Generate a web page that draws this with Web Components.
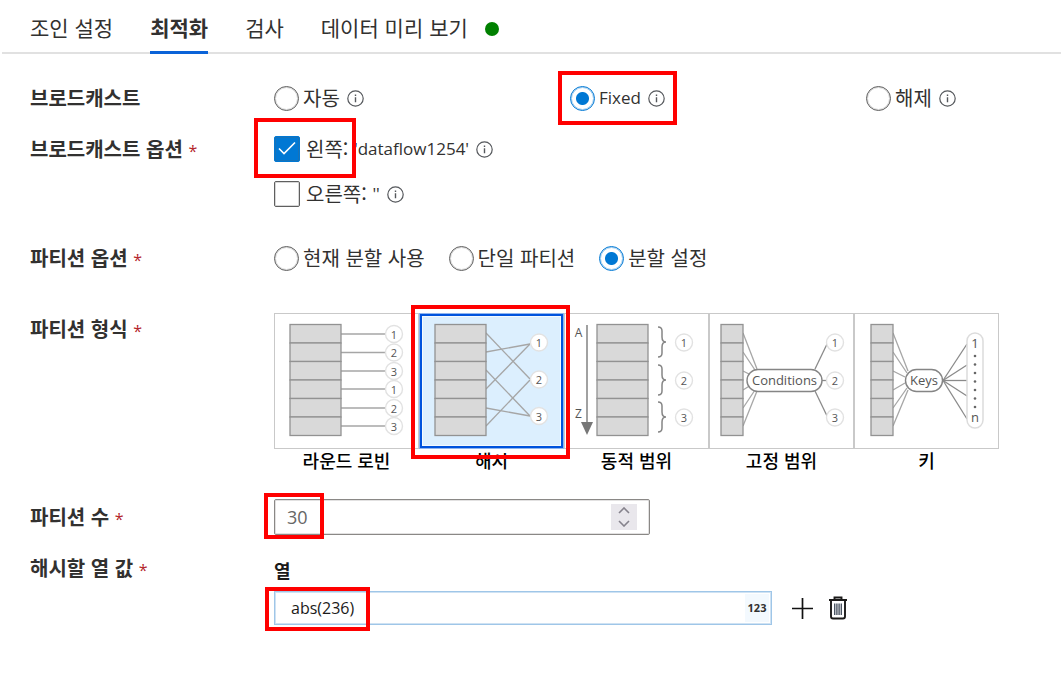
<!DOCTYPE html>
<html lang="ko">
<head>
<meta charset="utf-8">
<title>최적화</title>
<style>
  body { margin: 0; background: #fff; color: #323130; font: 20px/32px "Noto Sans CJK KR", sans-serif; }
</style>
</head>
<body>
<join-settings></join-settings>
<script>
const define = (name, html, setup) => {
  const t = document.createElement('template');
  t.innerHTML = html;
  customElements.define(name, class extends HTMLElement {
    constructor() {
      super();
      this.attachShadow({ mode: 'open' }).append(t.content.cloneNode(true));
    }
    connectedCallback() { if (setup) setup(this, this.shadowRoot); }
  });
};

define('info-icon', `
<style>:host{display:inline-flex;flex:none} svg{display:block}</style>
<svg width="17" height="17" viewBox="0 0 17 17" role="img" aria-label="info"><circle cx="8.5" cy="8.5" r="7.7" fill="none" stroke="#55585c" stroke-width="1.2"/><path d="M8.5 7.3v5M8.5 4.4v1.5" stroke="#55585c" stroke-width="1.4"/></svg>`);

/* Highlight frame laid over the control it marks. */
define('mark-frame', `
<style>:host{position:absolute;box-sizing:border-box;border:4px solid #f00;pointer-events:none;z-index:2}</style>`);

define('tab-bar', `
<style>
:host{display:block}
nav{display:flex;gap:37px;height:54px;box-sizing:border-box;border-bottom:2px solid #e1e1e1;margin-left:2px;padding-left:28px}
::slotted(a){color:inherit;text-decoration:none}
</style><nav><slot></slot></nav>`);

define('field-row', `
<style>
:host{display:grid;grid-template-columns:244px minmax(0,1fr)}
.label{font-weight:700;color:#323130}
.req{color:#b4262c;font:400 16px/32px "Open Sans",sans-serif}
:host(:not([required])) .req{display:none}
</style>
<div class="label"><slot name="label"></slot> <span class="req">*</span></div><div><slot></slot></div>`);

define('choice-option', `
<style>
:host{display:flex;align-items:center;height:32px;position:relative}
label{display:flex;align-items:center;white-space:pre}
input{appearance:none;box-sizing:border-box;flex:none;margin:0 4px 0 0;width:25px;height:25px;border:1px solid #5f5f5f;border-radius:50%;background:#fff;outline:1px solid #5f5f5f40;outline-offset:-2px}
input[type=radio]:checked{border-color:#0078d4;outline-color:#0078d460;background:radial-gradient(circle,#0078d4 6px,#fff 7px)}
input[type=checkbox]{width:26px;height:26px;border-radius:2px;margin-right:6px}
input[type=checkbox]:checked{border-color:#0078d4;background:#0078d4}
.box{display:grid;align-items:center}
.box>*{grid-area:1/1}
.box svg{display:none;pointer-events:none}
input[type=checkbox]:checked+svg{display:block}
info-icon{margin-left:7px}
:host(:not([info])) info-icon{display:none}
</style>
<label><span class="box"><input><svg width="26" height="26" viewBox="0 0 26 26"><path d="M5 12.5l5 5L21 6.5" fill="none" stroke="#fff" stroke-width="1.6"/></svg></span><slot></slot></label><info-icon></info-icon><slot name="mark"></slot>`,
(el, root) => {
  const i = root.querySelector('input');
  i.type = el.getAttribute('type');
  i.name = el.getAttribute('name');
  i.checked = el.hasAttribute('checked');
});

/* Diagram primitives in a 145 x 136 tile. */
const cells = (x, w) => Array.from({ length: 6 }, (_, i) =>
  `<rect x="${x}" y="${11.5 + i * 18.5}" width="${w}" height="18.5" fill="#d9d9d9" stroke="#929292" stroke-width="1.3"/>`).join('');
const dot = (x, y, n) => `<circle cx="${x}" cy="${y}" r="8.5" fill="#fff" stroke="#e2e2e2" stroke-width="1.4"/><text x="${x}" y="${y + 4.5}" text-anchor="middle">${n}</text>`;
const lines = (list, c = '#a6a6a6') => list.map(([a, b, x, y]) => `<path d="M${a} ${b}L${x} ${y}" stroke="${c}" stroke-width="1.3"/>`).join('');
const brace = y => `<path d="M94 ${y}q4 0 4 4v6q0 5 4 5q-4 0-4 5v6q0 4-4 4" fill="none" stroke="#858585" stroke-width="1.5"/>`;
const ys = [21, 39.5, 58, 76, 95, 113];
const drawings = {
  robin: lines(ys.map(y => [67, y, 111, y])) + cells(16, 51) + ys.map((y, i) => dot(120, y, i % 3 + 1)).join(''),
  hash: lines([[67,20,111,66],[67,39,111,31],[67,57,111,103],[67,76,111,31],[67,95,111,103],[67,113,111,67]]) + cells(16, 51) + dot(120, 29.5, 1) + dot(120, 66.5, 2) + dot(120, 103, 3),
  dynamic: `<path d="M23 12v98" stroke="#8a8a8a" stroke-width="1.6"/><path d="M17 109h12l-6 13z" fill="#777"/><text x="14.5" y="24" text-anchor="middle" class="m">A</text><text x="14.5" y="105" text-anchor="middle" class="m">Z</text>` + cells(33, 51) + brace(14) + brace(52) + brace(89) + dot(120, 29.5, 1) + dot(120, 67.5, 2) + dot(120, 104.5, 3),
  fixed: lines([[34,20,48,56],[34,39,46,57],[34,58,42,62],[34,77,42,72],[34,95,46,77],[34,113,48,78]]) + lines([[106,56,119,29],[113,67.5,118,67.5],[106,78,119,105]], '#8a8a8a') + cells(12, 22) + `<rect x="38" y="56.5" width="75" height="22" rx="11" fill="#fff" stroke="#858585" stroke-width="1.4"/><text x="75.5" y="72" text-anchor="middle" class="l">Conditions</text>` + dot(126, 29.5, 1) + dot(126, 67.5, 2) + dot(126, 104.5, 3),
  key: lines([[39,20,54,58],[39,39,53,60],[39,58,51,64],[39,77,51,70],[39,95,53,75],[39,113,54,77]]) + lines([[89,67.5,113,31],[89,67.5,113,52],[89,67.5,113,67.5],[89,67.5,113,83],[89,67.5,113,106]], '#8a8a8a') + cells(17, 22) + `<rect x="51.5" y="56.5" width="37" height="22" rx="11" fill="#fff" stroke="#858585" stroke-width="1.4"/><text x="70" y="72" text-anchor="middle" class="l">Keys</text><rect x="113" y="20" width="16" height="95" rx="8" fill="#fff" stroke="#dcdcdc" stroke-width="1.5"/><text x="121" y="35" text-anchor="middle" class="l">1</text><text x="121" y="109" text-anchor="middle" class="l">n</text>` + [43,51.5,60,68.5,77,85.5,94].map(y => `<circle cx="121" cy="${y}" r="1.3" fill="#666"/>`).join('')
};

define('partition-tile', `
<style>
:host{display:block;width:145px;position:relative}
button{display:block;width:100%;padding:0 0 2px;border:0;background:none;color:#000;font:500 18px/22px "Noto Sans CJK KR",sans-serif;text-align:center}
.art{display:block;height:136px;box-sizing:border-box;position:relative;box-shadow:inset 0 0 0 1px #c9c9c9}
:host([selected]) .art{background:#dceffe;box-shadow:inset 0 0 0 1px #8fb4ef,inset 0 0 0 3px #0053dd,inset 0 0 0 4px #f4faff}
svg{display:block} text{font:11px "Open Sans",sans-serif;fill:#555}
.m{font-size:12px}.l{font-size:13px}
</style>
<button type="button"><span class="art"></span><slot></slot></button><slot name="mark"></slot>`,
(el, root) => {
  root.querySelector('button').setAttribute('aria-pressed', el.hasAttribute('selected'));
  root.querySelector('.art').innerHTML = `<svg width="145" height="136" viewBox="0 0 145 136" aria-hidden="true">${drawings[el.getAttribute('art')]}</svg>`;
});

define('input-frame', `
<style>
:host{display:flex;align-items:center;box-sizing:border-box;position:relative;border:1px solid #8a8886;outline:1px solid #8a888640;outline-offset:-2px;border-radius:2px;width:376px;height:36px;padding-right:12px}
:host([wide]){width:498px;height:34px;border-color:#9fc6e8;outline-color:#9fc6e880;border-radius:0;padding-right:2px}
</style><slot></slot>`);

define('spin-buttons', `
<style>
:host{display:flex;flex-direction:column;width:26px;height:26px;background:#e9e7ec}
button{flex:1;padding:0;border:0;background:none;display:flex;align-items:center;justify-content:center}
</style>
<button type="button" aria-label="증가"><svg width="12" height="7"><path d="M1 6l5-5 5 5" fill="none" stroke="#85828c" stroke-width="1.6"/></svg></button>
<button type="button" aria-label="감소"><svg width="12" height="7"><path d="M1 1l5 5 5-5" fill="none" stroke="#85828c" stroke-width="1.6"/></svg></button>`);

define('icon-button', `
<style>
:host{display:block}
button{display:block;padding:0;border:0;background:none;color:#1b1a19}
::slotted(svg){display:block}
</style><button type="button"><slot></slot></button>`,
(el, root) => root.querySelector('button').setAttribute('aria-label', el.getAttribute('name')));

define('join-settings', `
<style>
:host{display:block}
tab-bar{font-size:21px}
tab-bar a{display:flex;align-items:center;box-sizing:border-box;height:54px}
tab-bar a.on{font-weight:700;border-bottom:3px solid #0a63d8;padding-top:3px}
.status{width:14px;height:14px;border-radius:50%;background:#008000;margin:4px 0 0 17px}
main{padding:28px 30px}
.thirds{display:grid;grid-template-columns:296px 296px 1fr}
.stack{display:grid;gap:13px;justify-items:start}
.inline{display:flex;gap:24px}
.tiles{display:flex}
.latin{font:17px/32px "Open Sans",sans-serif}
#opts{margin-top:19px}#part{margin-top:32px}#kind{margin-top:37px}#num{margin-top:26px}#cols{margin-top:17px}
input{flex:1;min-width:0;border:0;outline:0;background:none;padding:0 0 0 12px;color:#666;font:18px/24px "Open Sans",sans-serif}
#expr{padding-left:16px;color:#1b1a19;font-size:16px}
h2{margin:0 0 3px;font-size:18px;line-height:36px;font-weight:700;color:#1b1a19}
.type{width:24px;height:28px;background:#f3f9fe;font:700 11px/28px "Open Sans",sans-serif;text-align:center}
.line{display:flex;align-items:center;gap:19px}
.actions{display:flex;gap:14px;align-items:center}
#num label{line-height:36px}
</style>
<tab-bar>
  <a href="#join">조인 설정</a><a href="#optimize" class="on" aria-current="page">최적화</a><a href="#inspect">검사</a><a href="#preview">데이터 미리 보기<span class="status"></span></a>
</tab-bar>
<main>
  <field-row><span slot="label">브로드캐스트</span>
    <div class="thirds">
      <choice-option type="radio" name="broadcast" info>자동</choice-option>
      <choice-option type="radio" name="broadcast" checked info><span class="latin">Fixed</span><mark-frame slot="mark" style="left:-12px;top:-11px;width:119px;height:54px"></mark-frame></choice-option>
      <choice-option type="radio" name="broadcast" info>해제</choice-option>
    </div>
  </field-row>
  <field-row id="opts" required><span slot="label">브로드캐스트 옵션</span>
    <div class="stack">
      <choice-option type="checkbox" name="left" checked info>왼쪽: <span class="latin">'dataflow1254'</span><mark-frame slot="mark" style="left:-20px;top:-15px;width:102px;height:60px"></mark-frame></choice-option>
      <choice-option type="checkbox" name="right" info>오른쪽: <span class="latin">''</span></choice-option>
    </div>
  </field-row>
  <field-row id="part" required><span slot="label">파티션 옵션</span>
    <div class="inline">
      <choice-option type="radio" name="partition">현재 분할 사용</choice-option>
      <choice-option type="radio" name="partition">단일 파티션</choice-option>
      <choice-option type="radio" name="partition" checked>분할 설정</choice-option>
    </div>
  </field-row>
  <field-row id="kind" required><span slot="label">파티션 형식</span>
    <div class="tiles">
      <partition-tile art="robin">라운드 로빈</partition-tile>
      <partition-tile art="hash" selected>해시<mark-frame slot="mark" style="left:-8px;top:-8px;width:159px;height:154px"></mark-frame></partition-tile>
      <partition-tile art="dynamic">동적 범위</partition-tile>
      <partition-tile art="fixed">고정 범위</partition-tile>
      <partition-tile art="key">키</partition-tile>
    </div>
  </field-row>
  <field-row id="num" required><label slot="label" for="count">파티션 수</label>
    <input-frame><input id="count" type="text" inputmode="numeric" value="30"><spin-buttons></spin-buttons><mark-frame style="left:-11px;top:-7px;width:60px;height:46px"></mark-frame></input-frame>
  </field-row>
  <field-row id="cols" required><label slot="label" for="expr">해시할 열 값</label>
    <h2>열</h2>
    <div class="line">
      <input-frame wide><input id="expr" type="text" value="abs(236)"><span class="type">123</span><mark-frame style="left:-10px;top:-5px;width:105px;height:44px"></mark-frame></input-frame>
      <div class="actions">
        <icon-button name="추가"><svg width="23" height="23" viewBox="0 0 23 23"><path d="M1 11.5h21M11.5 1v21" stroke="#111" stroke-width="1.7"/></svg></icon-button>
        <icon-button name="삭제"><svg width="20" height="24" viewBox="0 0 20 24"><path d="M1 4h18M6.5 3.5V1.5h7v2M3 4.5v16q0 2 2 2h10q2 0 2-2v-16" fill="none" stroke="#1b1a19" stroke-width="1.9"/><path d="M6.7 7.5v11.5M8.9 7.5v11.5M11.1 7.5v11.5M13.3 7.5v11.5" stroke="#4b5563" stroke-width="1.4"/></svg></icon-button>
      </div>
    </div>
  </field-row>
</main>`);
</script>
</body>
</html>
